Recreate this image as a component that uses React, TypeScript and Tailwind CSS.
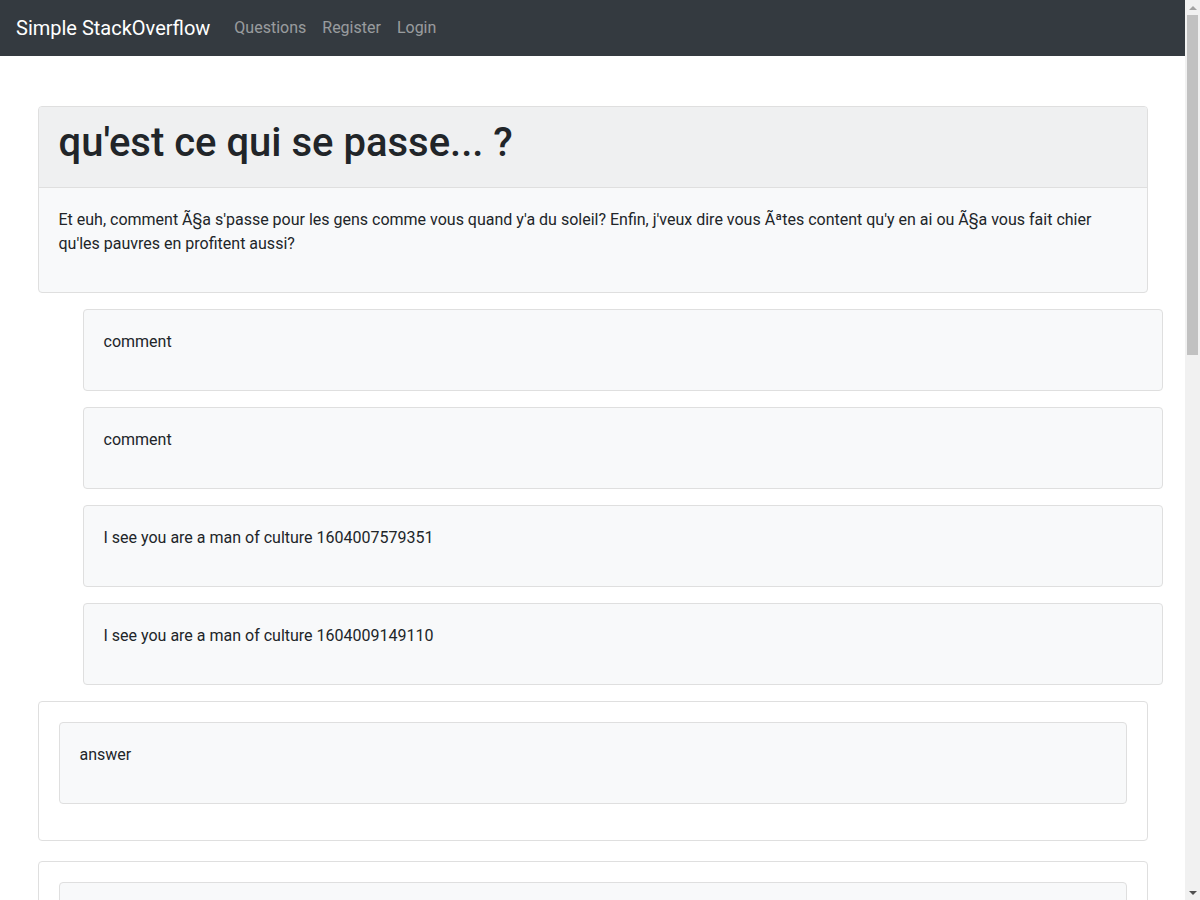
const comments = [
  "comment",
  "comment",
  "I see you are a man of culture 1604007579351",
  "I see you are a man of culture 1604009149110",
]

const answers = ["answer", "answer"]

export default function App() {
  return (
    <div className="h-screen flex bg-white text-[#212529] font-['Roboto','Liberation_Sans',sans-serif] text-base leading-6">
      <div className="flex-1 min-w-0 overflow-hidden">
        {/* Navbar */}
        <nav className="bg-[#343a40] h-14 px-4 flex items-center">
          <a className="text-white text-xl leading-[30px] mr-4">Simple StackOverflow</a>
          <div className="flex">
            <a className="px-2 text-white/50">Questions</a>
            <a className="px-2 text-white/50">Register</a>
            <a className="px-2 text-white/50">Login</a>
          </div>
        </nav>

        <div className="max-w-[1140px] mx-auto px-[15px] pt-[50px] pb-12">
          {/* Question */}
          <div className="border border-[#dfdfdf] rounded bg-[#f8f9fa] overflow-hidden">
            <div className="bg-[#eff0f1] border-b border-[#dfdfdf] px-5 pt-3 pb-3">
              <h1 className="text-[40px] leading-[48px] font-medium mb-2">qu'est ce qui se passe... ?</h1>
            </div>
            <div className="p-5">
              <p className="mb-4">
                Et euh, comment Ã§a s'passe pour les gens comme vous quand y'a du soleil? Enfin, j'veux dire vous Ãªtes content qu'y en ai ou Ã§a vous fait chier qu'les pauvres en profitent aussi?
              </p>
            </div>
          </div>

          {/* Comments */}
          <div className="ml-[45px] -mr-[15px] mt-4 flex flex-col gap-4">
            {comments.map((c, i) => (
              <div key={i} className="border border-[#dfdfdf] rounded bg-[#f8f9fa] p-5">
                <p className="mb-4">{c}</p>
              </div>
            ))}
          </div>

          {/* Answers */}
          <div className="mt-4 flex flex-col gap-5">
            {answers.map((a, i) => (
              <div key={i} className="border border-[#dfdfdf] rounded bg-white p-5">
                <div className="border border-[#dfdfdf] rounded bg-[#f8f9fa] p-5 mb-4">
                  <p className="mb-4">{a}</p>
                </div>
              </div>
            ))}
          </div>
        </div>
      </div>

      {/* Scrollbar */}
      <div className="w-[15px] shrink-0 bg-[#f1f1f1] flex flex-col">
        <div className="h-[15px] flex items-center justify-center">
          <div className="w-0 h-0 border-l-[4px] border-r-[4px] border-b-[4px] border-l-transparent border-r-transparent border-b-[#a3a3a3]" />
        </div>
        <div className="h-[340px] mx-[2px] bg-[#c1c1c1]" />
        <div className="flex-1" />
        <div className="h-[15px] flex items-center justify-center">
          <div className="w-0 h-0 border-l-[4px] border-r-[4px] border-t-[4px] border-l-transparent border-r-transparent border-t-[#505050]" />
        </div>
      </div>
    </div>
  )
}
